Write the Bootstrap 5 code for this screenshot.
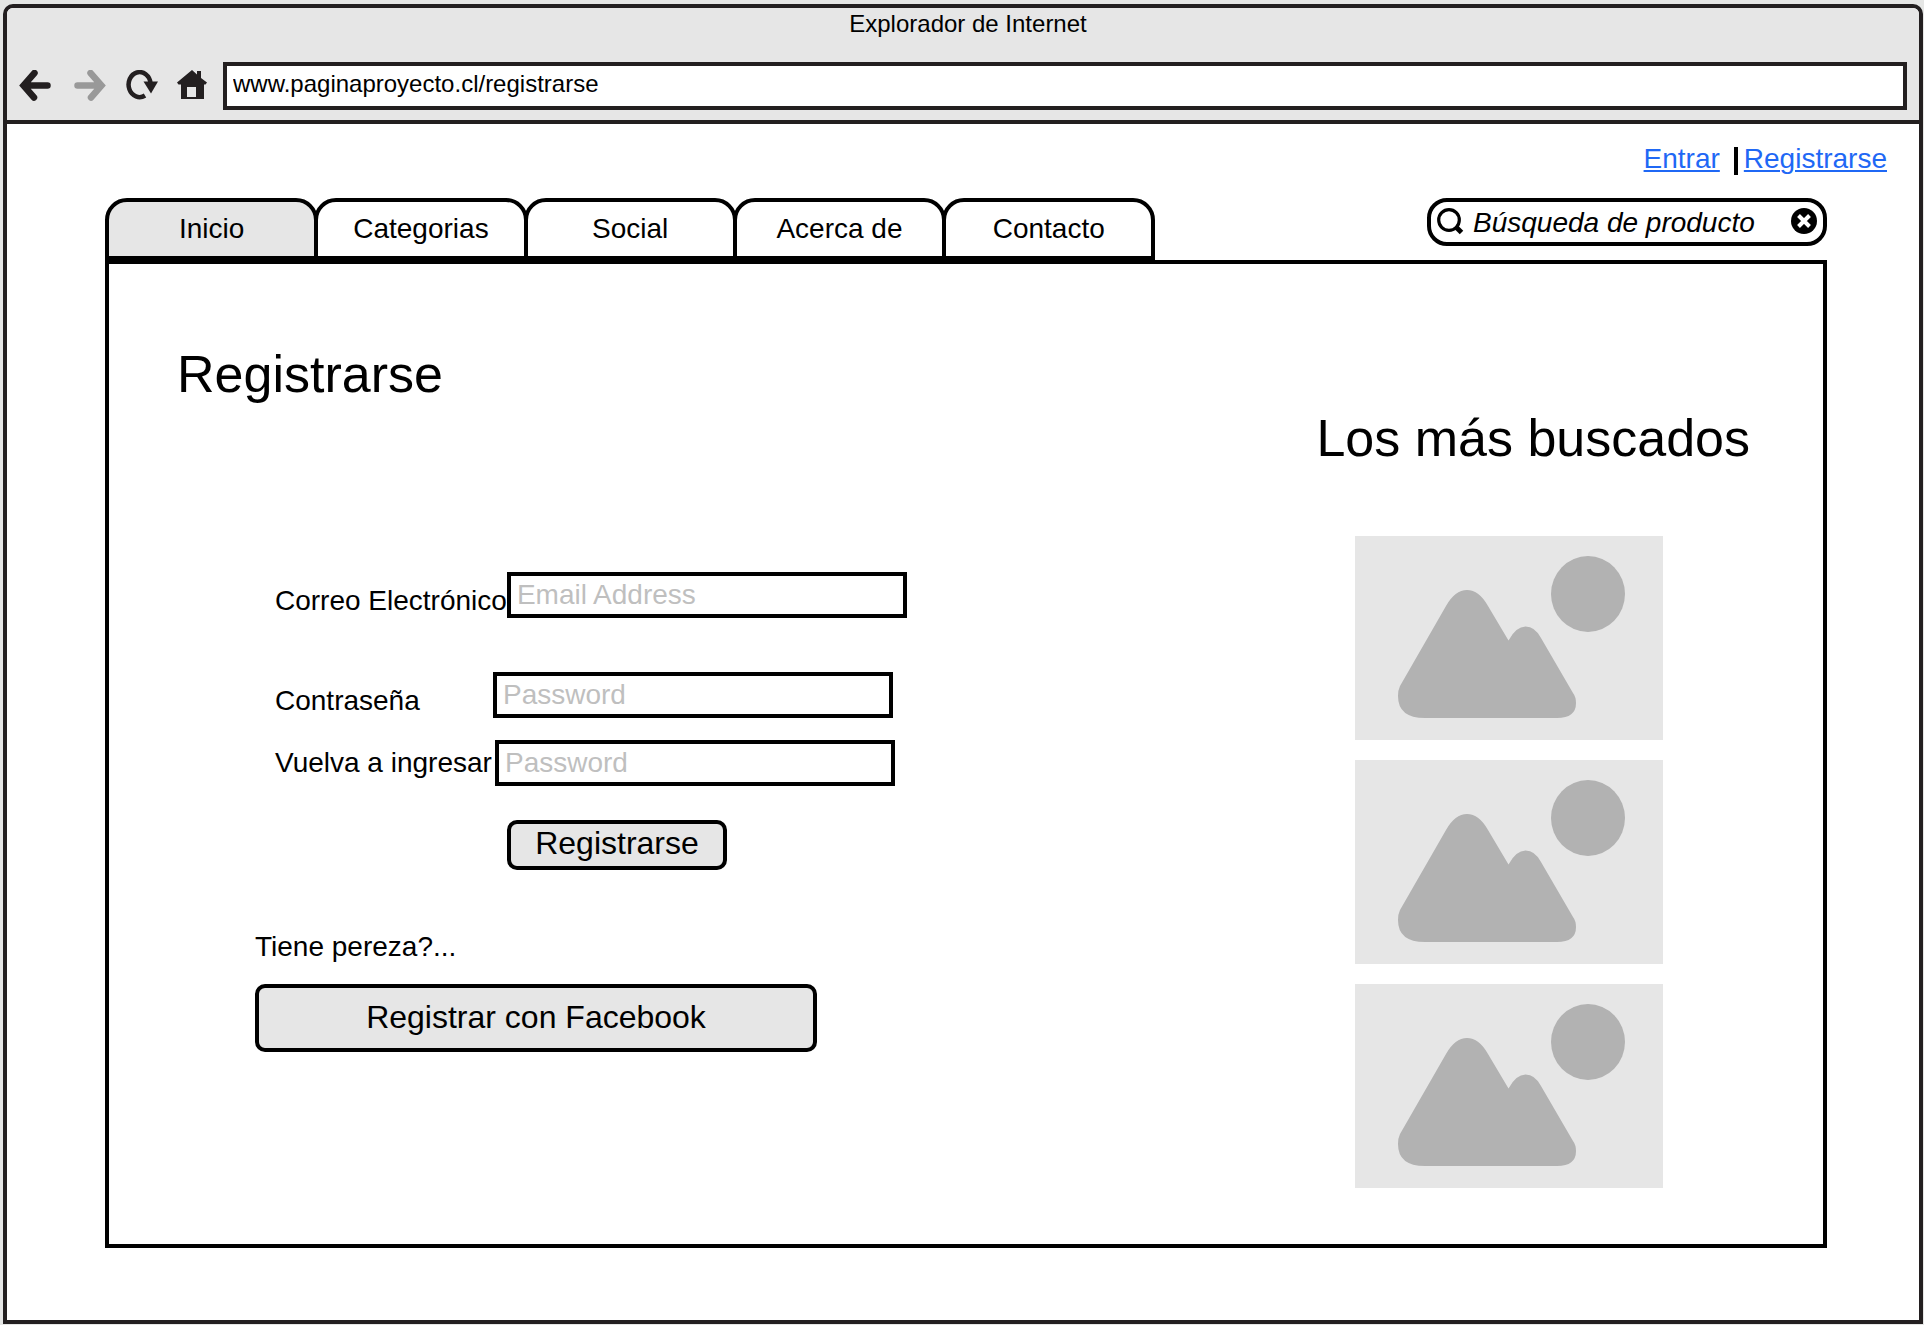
<!DOCTYPE html>
<html lang="es">
<head>
<meta charset="utf-8">
<meta name="viewport" content="width=device-width, initial-scale=1">
<title>Registrarse</title>
<link href="https://cdn.jsdelivr.net/npm/bootstrap@5.3.0/dist/css/bootstrap.min.css" rel="stylesheet">
<style>
  :root { --ink: #231f20; --fill: #e6e6e6; }
  body { background: #e5e6e5; color: #000; font-family: "Liberation Sans", Arial, sans-serif; font-size: 28px; line-height: 32px; padding: 4px 1px 1px 3px; }
  .browser { min-height: calc(100vh - 5px); border: 4px solid var(--ink); border-radius: 10px 10px 0 0; background: #fff; overflow: hidden; }
  .chrome { background: var(--fill); border-bottom: 4px solid var(--ink); padding: 2px 12px 10px; }
  .chrome-title { font-size: 24px; line-height: 28px; padding-left: 10px; }
  .tools { gap: 16px; margin-right: 12px; }
  .tool { width: 36px; height: 32px; color: var(--ink); }
  .tool:disabled { color: #999; opacity: 1; }
  .wire { border: 4px solid #000; border-radius: 0; color: #000; background: #fff; }
  .address { height: 48px; border-color: var(--ink); font-size: 24px; line-height: 28px; padding: 0 6px 4px; }
  .account { padding: 19px 32px 0 0; margin-bottom: 23px; }
  .account a { color: #1f68f5; text-decoration-thickness: 2px; text-underline-offset: 2px; }
  .divider { width: 4px; height: 28px; background: #000; margin: 0 6px 0 14px; }
  .site { padding: 0 92px 72px 98px; }
  .tabs { width: 61%; }
  .tab { height: 62px; border: 4px solid #000; border-radius: 22px 22px 0 0; background: #fff; color: #000; }
  .tab + .tab { margin-left: -4px; }
  .tab.active { background: var(--fill); }
  .search { width: 400px; height: 48px; border-radius: 20px; padding: 0 6px; }
  .search input { font-size: 28px; line-height: 32px; font-style: italic; padding: 1px 8px 0 9px; min-width: 0; }
  .search input::placeholder { color: #000; opacity: 1; }
  .panel { border: 4px solid #000; padding: 0 73px 56px 68px; }
  .headline { font-size: 52px; line-height: 60px; font-weight: 400; margin: 0; }
  .main-col { padding-top: 80px; }
  .signup { padding: 168px 0 0 98px; }
  .field-row label { padding-top: 13px; min-width: 218px; white-space: nowrap; }
  .field-row .low { padding-top: 7px; min-width: 220px; }
  .field-row input { width: 400px; height: 46px; padding: 0 6px; font-size: 28px; line-height: 32px; }
  .field-row input::placeholder { color: #bfbfbf; opacity: 1; }
  .gap-wide { margin-bottom: 54px; }
  .gap-near { margin-bottom: 22px; }
  .gap-send { margin-bottom: 34px; }
  .push { height: 50px; width: 220px; border: 4px solid #000; border-radius: 10px; background: var(--fill); color: #000; font-size: 32px; line-height: 36px; padding: 0 0 4px; }
  .push-send { margin-left: 232px; }
  .social { padding: 61px 0 0 78px; }
  .social p { margin-bottom: 21px; }
  .push-wide { width: 562px; height: 68px; padding-bottom: 2px; }
  .side-col { padding-top: 144px; }
  .shots { padding: 68px 0 0 39px; gap: 20px; }
  .shot { width: 308px; height: 204px; background: var(--fill); }
</style>
</head>
<body>
<div class="browser">
  <header class="chrome">
    <div class="chrome-title text-center mb-4">Explorador de Internet</div>
    <div class="d-flex align-items-center">
      <div class="tools d-flex">
        <button class="tool btn p-0 border-0 d-flex" type="button" aria-label="Atrás">
          <svg width="36" height="32" viewBox="0 0 36 32" fill="none" stroke="currentColor" stroke-width="6.500" stroke-linecap="round" stroke-linejoin="miter"><path d="M15.500 3 4.500 15.500 15 27.500M6 15.500H28.500"/></svg>
        </button>
        <button class="tool btn p-0 border-0 d-flex" type="button" aria-label="Adelante" disabled>
          <svg width="36" height="32" viewBox="0 0 36 32" fill="none" stroke="currentColor" stroke-width="6.500" stroke-linecap="round" stroke-linejoin="miter"><path d="M19.500 3 30.500 15.500 20 27.500M29 15.500H6.500"/></svg>
        </button>
        <button class="tool btn p-0 border-0 d-flex" type="button" aria-label="Recargar">
          <svg width="36" height="32" viewBox="0 0 36 32"><path d="M22 25.500A11 12.500 0 1 1 27.500 13" fill="none" stroke="currentColor" stroke-width="4.500"/><path d="M20.500 11.500H35L28 23.500Z" fill="currentColor"/></svg>
        </button>
        <button class="tool btn p-0 border-0 d-flex" type="button" aria-label="Inicio">
          <svg width="36" height="32" viewBox="0 0 36 32"><path d="M2 12.500 17 0l5 4.500V1h4v7l6 4.500-1.500 2H29V29H6V14.500H3.500Z" fill="currentColor"/><path d="M12 17h9v10H12Z" fill="#e6e6e6"/></svg>
        </button>
      </div>
      <input class="wire address flex-fill" type="text" aria-label="Dirección" value="www.paginaproyecto.cl/registrarse">
    </div>
  </header>

  <nav class="account d-flex justify-content-end align-items-end" aria-label="Cuenta">
    <a href="#entrar">Entrar</a><span class="divider"></span><a href="#registrarse">Registrarse</a>
  </nav>

  <div class="site">
    <div class="d-flex justify-content-between align-items-start">
      <nav class="tabs d-flex" aria-label="Principal">
        <a class="tab active col d-flex align-items-center justify-content-center text-decoration-none" href="#inicio">Inicio</a>
        <a class="tab col d-flex align-items-center justify-content-center text-decoration-none" href="#categorias">Categorias</a>
        <a class="tab col d-flex align-items-center justify-content-center text-decoration-none" href="#social">Social</a>
        <a class="tab col d-flex align-items-center justify-content-center text-decoration-none" href="#acerca">Acerca de</a>
        <a class="tab col d-flex align-items-center justify-content-center text-decoration-none" href="#contacto">Contacto</a>
      </nav>
      <form class="search wire d-flex align-items-center" role="search">
        <svg class="flex-shrink-0" width="27" height="28" viewBox="0 0 27 28" fill="none" stroke="#000"><circle cx="12" cy="12" r="10.300" stroke-width="3.200"/><path d="m18.500 18.500 6 6" stroke-width="5"/></svg>
        <input class="flex-fill border-0 bg-transparent" type="text" aria-label="Búsqueda de producto" placeholder="Búsqueda de producto">
        <button class="btn p-0 border-0 d-flex flex-shrink-0" type="reset" aria-label="Borrar">
          <svg width="26" height="28" viewBox="0 0 26 28"><circle cx="13" cy="13" r="13"/><path d="m7.500 7.500 11 11m0-11-11 11" stroke="#fff" stroke-width="4"/></svg>
        </button>
      </form>
    </div>

    <main class="panel d-flex justify-content-between">
      <section class="main-col">
        <h1 class="headline">Registrarse</h1>
        <form class="signup">
          <div class="field-row d-flex align-items-start gap-wide">
            <label for="correo">Correo Electrónico</label>
            <input class="wire" id="correo" type="email" placeholder="Email Address">
          </div>
          <div class="field-row d-flex align-items-start gap-near">
            <label for="clave">Contraseña</label>
            <input class="wire" id="clave" type="password" placeholder="Password">
          </div>
          <div class="field-row d-flex align-items-start gap-send">
            <label class="low" for="clave2">Vuelva a ingresar</label>
            <input class="wire" id="clave2" type="password" placeholder="Password">
          </div>
          <button class="push push-send d-block" type="submit">Registrarse</button>
        </form>
        <div class="social">
          <p>Tiene pereza?...</p>
          <button class="push push-wide d-block" type="button">Registrar con Facebook</button>
        </div>
      </section>

      <aside class="side-col">
        <h2 class="headline">Los más buscados</h2>
        <div class="shots d-flex flex-column">
          <svg class="shot" viewBox="0 0 308 204" role="img" aria-label="Producto 1"><g id="scene" fill="#b2b2b2"><ellipse cx="233" cy="58" rx="37" ry="38"/><path d="M45 150 91 70Q100 54 112 54T133 70L153.500 104.500Q161 90.500 170.500 90.500T186 102L218 157Q221 161 221 167 221 182 202 182H70Q43 182 43 160 43 154 45 150Z"/></g></svg>
          <svg class="shot" viewBox="0 0 308 204" role="img" aria-label="Producto 2"><use href="#scene"/></svg>
          <svg class="shot" viewBox="0 0 308 204" role="img" aria-label="Producto 3"><use href="#scene"/></svg>
        </div>
      </aside>
    </main>
  </div>
</div>
<script src="https://cdn.jsdelivr.net/npm/bootstrap@5.3.0/dist/js/bootstrap.bundle.min.js"></script>
</body>
</html>
